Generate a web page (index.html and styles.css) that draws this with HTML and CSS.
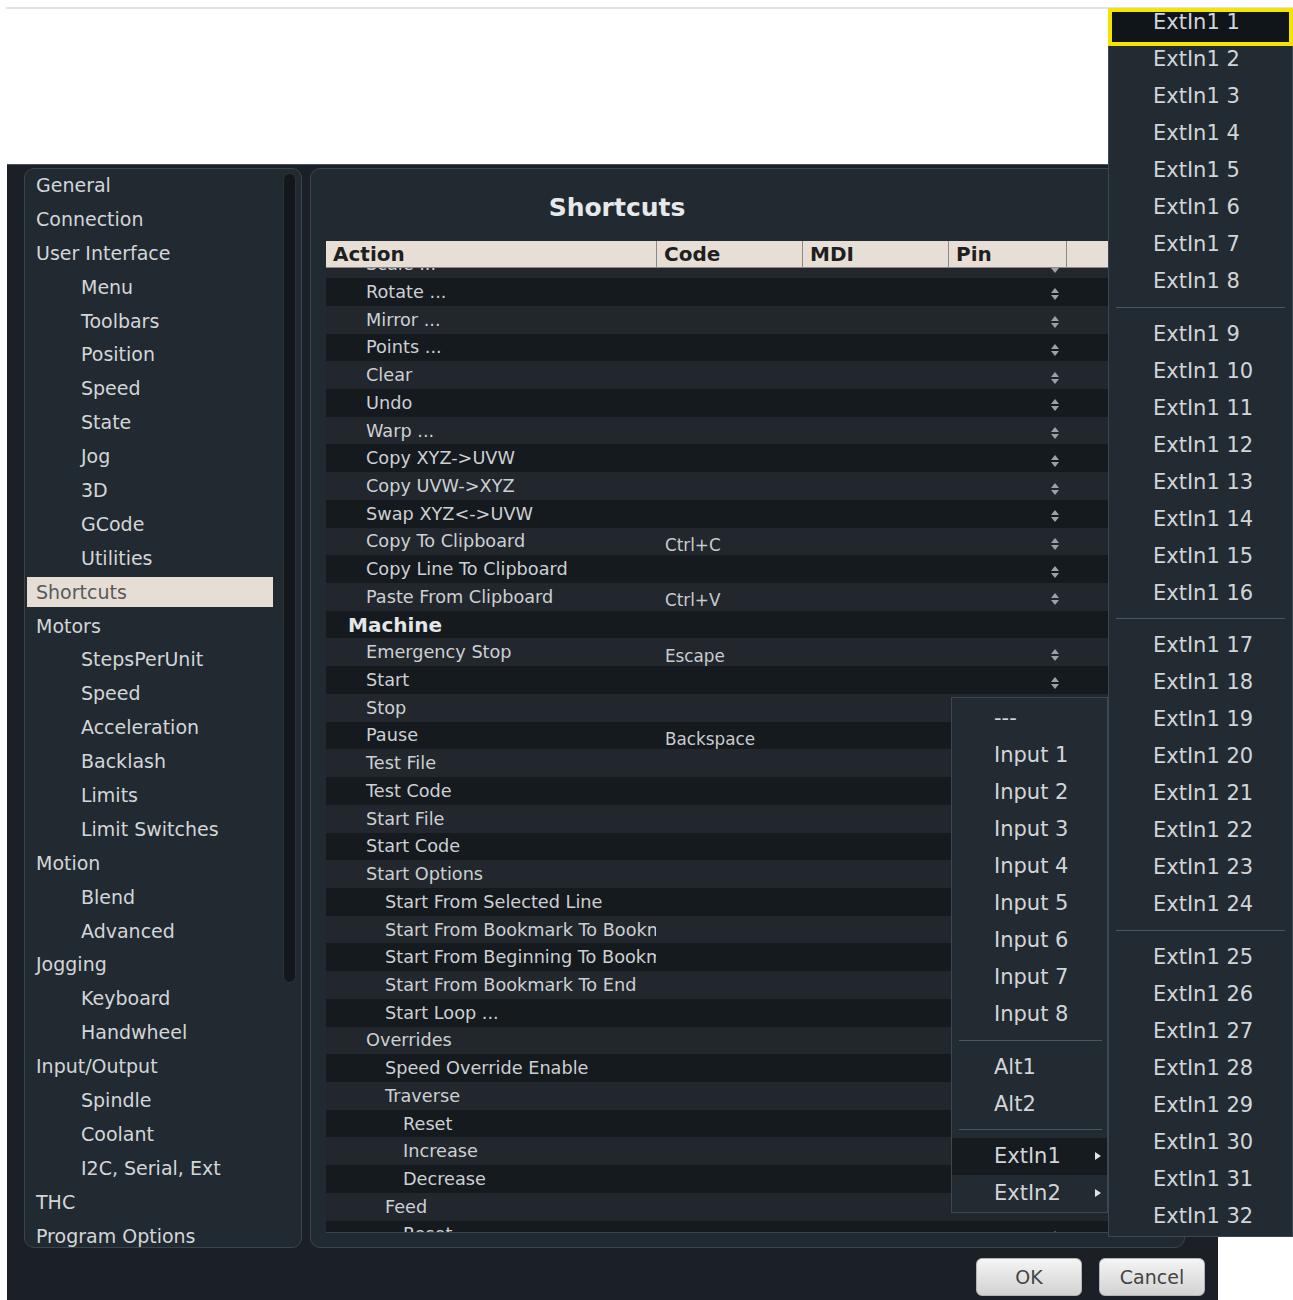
FILE: index.html
```html
<!DOCTYPE html>
<html lang="en">
<head>
<meta charset="utf-8">
<title>Settings - Shortcuts</title>
<link rel="stylesheet" href="styles.css">
</head>
<body>
<div class="screen">
  <div class="topline"></div>

  <div class="dialog">
    <div class="panes">
      <nav class="nav">
        <ul class="nav-list">
          <li class="nav-item">General</li>
          <li class="nav-item">Connection</li>
          <li class="nav-item">User Interface</li>
          <li class="nav-item sub">Menu</li>
          <li class="nav-item sub">Toolbars</li>
          <li class="nav-item sub">Position</li>
          <li class="nav-item sub">Speed</li>
          <li class="nav-item sub">State</li>
          <li class="nav-item sub">Jog</li>
          <li class="nav-item sub">3D</li>
          <li class="nav-item sub">GCode</li>
          <li class="nav-item sub">Utilities</li>
          <li class="nav-item current">Shortcuts</li>
          <li class="nav-item">Motors</li>
          <li class="nav-item sub">StepsPerUnit</li>
          <li class="nav-item sub">Speed</li>
          <li class="nav-item sub">Acceleration</li>
          <li class="nav-item sub">Backlash</li>
          <li class="nav-item sub">Limits</li>
          <li class="nav-item sub">Limit Switches</li>
          <li class="nav-item">Motion</li>
          <li class="nav-item sub">Blend</li>
          <li class="nav-item sub">Advanced</li>
          <li class="nav-item">Jogging</li>
          <li class="nav-item sub">Keyboard</li>
          <li class="nav-item sub">Handwheel</li>
          <li class="nav-item">Input/Output</li>
          <li class="nav-item sub">Spindle</li>
          <li class="nav-item sub">Coolant</li>
          <li class="nav-item sub">I2C, Serial, Ext</li>
          <li class="nav-item">THC</li>
          <li class="nav-item">Program Options</li>
        </ul>
        <div class="scrollbar"></div>
      </nav>

      <section class="page">
        <h1 class="title">Shortcuts</h1>
        <div class="table">
          <div class="thead">
            <span class="th">Action</span>
            <span class="th">Code</span>
            <span class="th">MDI</span>
            <span class="th">Pin</span>
            <span class="th"></span>
          </div>
          <div class="tbody">
            <div class="rows">
              <div class="row"><span class="act">Scale ...</span><span class="code"></span><span></span><span class="pin"><i class="spin"></i></span><span></span></div>
              <div class="row"><span class="act">Rotate ...</span><span class="code"></span><span></span><span class="pin"><i class="spin"></i></span><span></span></div>
              <div class="row"><span class="act">Mirror ...</span><span class="code"></span><span></span><span class="pin"><i class="spin"></i></span><span></span></div>
              <div class="row"><span class="act">Points ...</span><span class="code"></span><span></span><span class="pin"><i class="spin"></i></span><span></span></div>
              <div class="row"><span class="act">Clear</span><span class="code"></span><span></span><span class="pin"><i class="spin"></i></span><span></span></div>
              <div class="row"><span class="act">Undo</span><span class="code"></span><span></span><span class="pin"><i class="spin"></i></span><span></span></div>
              <div class="row"><span class="act">Warp ...</span><span class="code"></span><span></span><span class="pin"><i class="spin"></i></span><span></span></div>
              <div class="row"><span class="act">Copy XYZ-&gt;UVW</span><span class="code"></span><span></span><span class="pin"><i class="spin"></i></span><span></span></div>
              <div class="row"><span class="act">Copy UVW-&gt;XYZ</span><span class="code"></span><span></span><span class="pin"><i class="spin"></i></span><span></span></div>
              <div class="row"><span class="act">Swap XYZ&lt;-&gt;UVW</span><span class="code"></span><span></span><span class="pin"><i class="spin"></i></span><span></span></div>
              <div class="row"><span class="act">Copy To Clipboard</span><span class="code">Ctrl+C</span><span></span><span class="pin"><i class="spin"></i></span><span></span></div>
              <div class="row"><span class="act">Copy Line To Clipboard</span><span class="code"></span><span></span><span class="pin"><i class="spin"></i></span><span></span></div>
              <div class="row"><span class="act">Paste From Clipboard</span><span class="code">Ctrl+V</span><span></span><span class="pin"><i class="spin"></i></span><span></span></div>
              <div class="row"><span class="act section">Machine</span><span class="code"></span><span></span><span class="pin"></span><span></span></div>
              <div class="row"><span class="act">Emergency Stop</span><span class="code">Escape</span><span></span><span class="pin"><i class="spin"></i></span><span></span></div>
              <div class="row"><span class="act">Start</span><span class="code"></span><span></span><span class="pin"><i class="spin"></i></span><span></span></div>
              <div class="row"><span class="act">Stop</span><span class="code"></span><span></span><span class="pin"><i class="spin"></i></span><span></span></div>
              <div class="row"><span class="act">Pause</span><span class="code">Backspace</span><span></span><span class="pin"><i class="spin"></i></span><span></span></div>
              <div class="row"><span class="act">Test File</span><span class="code"></span><span></span><span class="pin"><i class="spin"></i></span><span></span></div>
              <div class="row"><span class="act">Test Code</span><span class="code"></span><span></span><span class="pin"><i class="spin"></i></span><span></span></div>
              <div class="row"><span class="act">Start File</span><span class="code"></span><span></span><span class="pin"><i class="spin"></i></span><span></span></div>
              <div class="row"><span class="act">Start Code</span><span class="code"></span><span></span><span class="pin"><i class="spin"></i></span><span></span></div>
              <div class="row"><span class="act">Start Options</span><span class="code"></span><span></span><span class="pin"></span><span></span></div>
              <div class="row"><span class="act l2">Start From Selected Line</span><span class="code"></span><span></span><span class="pin"><i class="spin"></i></span><span></span></div>
              <div class="row"><span class="act l2">Start From Bookmark To Bookmark</span><span class="code"></span><span></span><span class="pin"><i class="spin"></i></span><span></span></div>
              <div class="row"><span class="act l2">Start From Beginning To Bookmark</span><span class="code"></span><span></span><span class="pin"><i class="spin"></i></span><span></span></div>
              <div class="row"><span class="act l2">Start From Bookmark To End</span><span class="code"></span><span></span><span class="pin"><i class="spin"></i></span><span></span></div>
              <div class="row"><span class="act l2">Start Loop ...</span><span class="code"></span><span></span><span class="pin"><i class="spin"></i></span><span></span></div>
              <div class="row"><span class="act">Overrides</span><span class="code"></span><span></span><span class="pin"></span><span></span></div>
              <div class="row"><span class="act l2">Speed Override Enable</span><span class="code"></span><span></span><span class="pin"><i class="spin"></i></span><span></span></div>
              <div class="row"><span class="act l2">Traverse</span><span class="code"></span><span></span><span class="pin"></span><span></span></div>
              <div class="row"><span class="act l3">Reset</span><span class="code"></span><span></span><span class="pin"><i class="spin"></i></span><span></span></div>
              <div class="row"><span class="act l3">Increase</span><span class="code"></span><span></span><span class="pin"><i class="spin"></i></span><span></span></div>
              <div class="row"><span class="act l3">Decrease</span><span class="code"></span><span></span><span class="pin"><i class="spin"></i></span><span></span></div>
              <div class="row"><span class="act l2">Feed</span><span class="code"></span><span></span><span class="pin"></span><span></span></div>
              <div class="row"><span class="act l3">Reset</span><span class="code"></span><span></span><span class="pin"><i class="spin"></i></span><span></span></div>
              <div class="row"><span class="act l3">Increase</span><span class="code"></span><span></span><span class="pin"><i class="spin"></i></span><span></span></div>
              <div class="row"><span class="act l3">Decrease</span><span class="code"></span><span></span><span class="pin"><i class="spin"></i></span><span></span></div>
            </div>
          </div>
        </div>
      </section>
    </div>

    <div class="buttons">
      <button class="btn">OK</button>
      <button class="btn">Cancel</button>
    </div>
  </div>

  <!-- pin selector popup -->
  <div class="menu pin-menu">
    <div class="item">---</div>
    <div class="item">Input 1</div>
    <div class="item">Input 2</div>
    <div class="item">Input 3</div>
    <div class="item">Input 4</div>
    <div class="item">Input 5</div>
    <div class="item">Input 6</div>
    <div class="item">Input 7</div>
    <div class="item">Input 8</div>
    <div class="sep"></div>
    <div class="item">Alt1</div>
    <div class="item">Alt2</div>
    <div class="sep"></div>
    <div class="item open">ExtIn1<i class="arrow"></i></div>
    <div class="item">ExtIn2<i class="arrow"></i></div>
  </div>

  <!-- ExtIn1 submenu -->
  <div class="menu ext-menu">
    <div class="mark"></div>
    <div class="ext-list">
      <div class="item">ExtIn1 1</div>
      <div class="item">ExtIn1 2</div>
      <div class="item">ExtIn1 3</div>
      <div class="item">ExtIn1 4</div>
      <div class="item">ExtIn1 5</div>
      <div class="item">ExtIn1 6</div>
      <div class="item">ExtIn1 7</div>
      <div class="item">ExtIn1 8</div>
      <div class="sep"></div>
      <div class="item">ExtIn1 9</div>
      <div class="item">ExtIn1 10</div>
      <div class="item">ExtIn1 11</div>
      <div class="item">ExtIn1 12</div>
      <div class="item">ExtIn1 13</div>
      <div class="item">ExtIn1 14</div>
      <div class="item">ExtIn1 15</div>
      <div class="item">ExtIn1 16</div>
      <div class="sep"></div>
      <div class="item">ExtIn1 17</div>
      <div class="item">ExtIn1 18</div>
      <div class="item">ExtIn1 19</div>
      <div class="item">ExtIn1 20</div>
      <div class="item">ExtIn1 21</div>
      <div class="item">ExtIn1 22</div>
      <div class="item">ExtIn1 23</div>
      <div class="item">ExtIn1 24</div>
      <div class="sep"></div>
      <div class="item">ExtIn1 25</div>
      <div class="item">ExtIn1 26</div>
      <div class="item">ExtIn1 27</div>
      <div class="item">ExtIn1 28</div>
      <div class="item">ExtIn1 29</div>
      <div class="item">ExtIn1 30</div>
      <div class="item">ExtIn1 31</div>
      <div class="item">ExtIn1 32</div>
    </div>
  </div>
</div>
</body>
</html>
```

FILE: styles.css
```css
* {
  box-sizing: border-box;
}

html,
body {
  margin: 0;
  background: #ffffff;
}

body {
  font-family: "DejaVu Sans", Verdana, sans-serif;
}

.screen {
  position: relative;
  width: 1293px;
  height: 1300px;
  overflow: hidden;
}

.topline {
  height: 2px;
  margin: 7px 0 0 6px;
  background: #e2e2e2;
}

/* dialog window */
.dialog {
  margin: 155px 0 0 7px;
  width: 1211px;
  height: 1136px;
  background: #1a2026;
  border-top: 1px solid #4a535a;
}

.panes {
  display: flex;
  gap: 8px;
  padding: 3px 0 0 17px;
}

/* category list */
.nav {
  display: flex;
  gap: 10px;
  width: 278px;
  height: 1080px;
  padding: 0 5px 0 2px;
  background: #222a31;
  border: 1px solid #3b454d;
  border-radius: 10px;
}

.nav-list {
  width: 246px;
  margin: -1px 0 0;
  padding: 0;
  list-style: none;
}

.nav-item {
  display: flex;
  align-items: center;
  height: 33.9px;
  padding-left: 9px;
  font-size: 19px;
  color: #d3d6d8;
  white-space: nowrap;
}

.nav-item.sub {
  padding-left: 54px;
}

.nav-item.current {
  height: 29.9px;
  margin: 2px 0;
  background: #e6ded4;
  color: #595959;
}

.scrollbar {
  width: 13px;
  height: 810px;
  margin-top: 4px;
  background: #13181c;
  border: 1px solid #2b3339;
  border-radius: 7px;
}

/* shortcuts page */
.page {
  width: 875px;
  height: 1080px;
  padding: 24px 14px 14px 15px;
  background: #222a31;
  border: 1px solid #3b454d;
  border-radius: 10px;
}

.title {
  width: 582px;
  height: 30px;
  margin: 0 0 18px;
  line-height: 30px;
  text-align: center;
  font-size: 25px;
  font-weight: bold;
  color: #e6e8e9;
}

.table {
  width: 844px;
}

.thead,
.row {
  display: grid;
  grid-template-columns: 330px 146px 146px 118px 104px;
}

.thead {
  height: 27px;
  background: #e7dfd5;
  border-bottom: 1px solid #8c8782;
}

.th {
  padding-left: 7px;
  line-height: 26px;
  font-size: 20px;
  font-weight: bold;
  color: #1f1f1f;
}

.th + .th {
  border-left: 1px solid #8f8a85;
}

.tbody {
  height: 965px;
  overflow: hidden;
  border-bottom: 1px solid #3a434a;
}

.rows {
  margin-top: -17.6px;
}

.row {
  height: 27.73px;
  align-items: center;
  background: #21272d;
}

.row:nth-child(even) {
  background: #151a1f;
}

.act {
  padding-left: 40px;
  font-size: 17.7px;
  color: #cdd0d2;
  white-space: nowrap;
  overflow: hidden;
}

.act.l2 {
  padding-left: 59px;
}

.act.l3 {
  padding-left: 77px;
}

.act.section {
  padding-left: 22px;
  font-size: 20px;
  font-weight: bold;
  color: #e4e6e7;
}

.code {
  padding: 7px 0 0 9px;
  font-size: 16.8px;
  color: #c9ccce;
  white-space: nowrap;
}

.pin {
  display: flex;
  justify-content: flex-end;
  padding: 5px 7px 0 0;
}

/* up/down stepper glyph */
.spin {
  display: flex;
  flex-direction: column;
  align-items: center;
  gap: 2px;
  width: 8px;
}

.spin::before,
.spin::after {
  content: "";
  width: 0;
  height: 0;
  border-left: 4px solid transparent;
  border-right: 4px solid transparent;
}

.spin::before {
  border-bottom: 5px solid #9ba1a6;
}

.spin::after {
  border-top: 5px solid #9ba1a6;
}

/* buttons */
.buttons {
  display: flex;
  justify-content: flex-end;
  gap: 17px;
  margin-top: 10px;
  padding-right: 13px;
}

.btn {
  width: 106px;
  height: 38px;
  font-family: inherit;
  font-size: 19px;
  color: #444444;
  background: linear-gradient(#f5f5f5, #d2d2d2);
  border: 1px solid #b3b3b3;
  border-radius: 6px;
}

/* popup menus */
.menu {
  position: absolute;
  background: #232b32;
  border: 1px solid #3c4750;
}

.menu .item {
  display: flex;
  align-items: center;
  font-size: 21px;
  color: #d2d5d7;
  white-space: nowrap;
}

.menu .sep {
  display: flex;
  align-items: center;
  height: 15.3px;
}

.menu .sep::before {
  content: "";
  flex: 1;
  height: 1px;
  background: #4b565f;
}

.pin-menu {
  left: 951px;
  top: 697px;
  width: 157px;
  height: 516px;
  padding: 1px 0;
}

.pin-menu .item {
  height: 37.1px;
  padding: 0 6px 0 42px;
}

.pin-menu .sep {
  padding: 0 5px 0 7px;
}

.pin-menu .item.open {
  background: #161b20;
}

.arrow {
  width: 0;
  height: 0;
  margin-left: auto;
  border-top: 4.5px solid transparent;
  border-bottom: 4.5px solid transparent;
  border-left: 6px solid #e2e4e5;
}

.ext-menu {
  left: 1108px;
  top: 8px;
  width: 185px;
  height: 1229px;
}

.ext-list {
  position: relative;
  margin-top: -5.5px;
}

.ext-menu .item {
  height: 37.04px;
  padding-left: 44px;
}

.ext-menu .sep {
  padding: 0 7px;
}

/* highlighted first entry */
.mark {
  position: absolute;
  top: -1px;
  left: -1px;
  right: -1px;
  height: 38px;
  background: #10151a;
  border: 4px solid #f4e500;
}
```
